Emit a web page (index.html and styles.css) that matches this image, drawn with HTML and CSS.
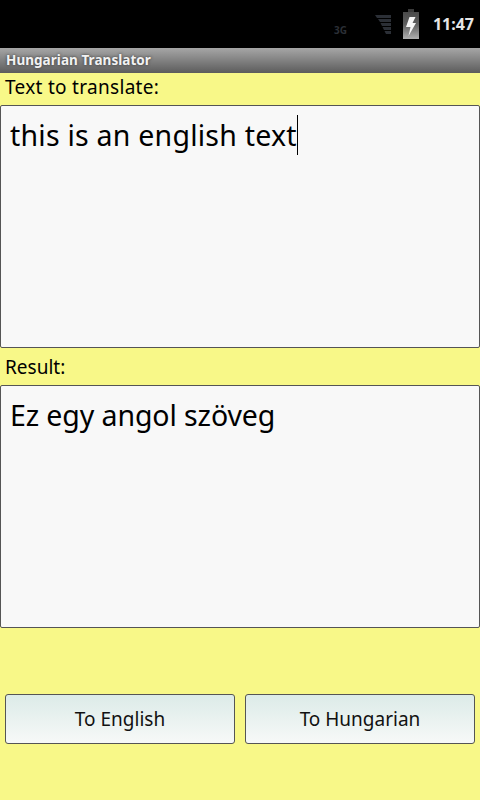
FILE: index.html
```html
<!DOCTYPE html>
<html lang="en">
<head>
    <meta charset="UTF-8">
    <meta name="viewport" content="width=device-width, initial-scale=1.0">
    <title>Hungarian Translator</title>
    <link rel="stylesheet" href="styles.css">
</head>
<body>
    <div class="status-bar">
        <span class="net-label">3G</span>
        <svg class="signal" width="16" height="19" viewBox="0 0 16 19">
            <path d="M0 0H16V3H2Z M3 4H16V7H5Z M5.500 8H16V11H7Z M7.500 12H16V15H9Z M9.500 16H16V19H11Z" fill="#2b2f36"/>
        </svg>
        <svg class="battery" width="16" height="30" viewBox="0 0 16 30">
            <defs>
                <linearGradient id="batteryFill" x1="0" y1="0" x2="0" y2="1">
                    <stop offset="0" stop-color="#4a4a4a"/>
                    <stop offset="0.45" stop-color="#5e5e5e"/>
                    <stop offset="1" stop-color="#b0b0b0"/>
                </linearGradient>
            </defs>
            <rect x="5" y="0" width="6" height="3" fill="#3a3a3a"/>
            <rect x="0" y="3" width="16" height="27" fill="url(#batteryFill)"/>
            <path d="M6.500 8H12.500L9.500 14H13L5.500 27L7.500 18H3Z" fill="#f6f6f6"/>
        </svg>
        <span class="clock">11:47</span>
    </div>
    <div class="title-bar">Hungarian Translator</div>
    <main class="content">
        <label class="field-label source-label">Text to translate:</label>
        <div class="text-box"><span class="typed">this is an english text</span></div>
        <label class="field-label result-label">Result:</label>
        <div class="text-box result-text">Ez egy angol szöveg</div>
        <div class="actions">
            <button class="action-btn">To English</button>
            <button class="action-btn">To Hungarian</button>
        </div>
    </main>
</body>
</html>
```

FILE: styles.css
```css
* { box-sizing: border-box; }
body {
    margin: 0;
    width: 480px;
    height: 800px;
    overflow: hidden;
    background: #f8f888;
    font-family: "Noto Sans", "Open Sans", sans-serif;
    color: #000;
}
.status-bar {
    height: 48px;
    background: #000;
    display: flex;
    align-items: center;
    justify-content: flex-end;
    padding-right: 6px;
}
.net-label {
    font-size: 10px;
    font-weight: 700;
    color: #2b2f36;
    margin-right: 28px;
    margin-top: 11px;
}
.signal { margin-right: 12px; }
.battery { margin-right: 14px; }
.clock {
    font-size: 16px;
    font-weight: 700;
    color: #e6e6e6;
}
.title-bar {
    height: 25px;
    background: linear-gradient(#a6a6a6, #5c5c5c);
    color: #f2f2f2;
    font-size: 13.5px;
    font-weight: 700;
    letter-spacing: 0.05px;
    line-height: 24px;
    padding-left: 6px;
    text-shadow: 0 0 3px #333;
}
.content {
    display: flex;
    flex-direction: column;
}
.field-label {
    display: block;
    height: 32px;
    padding-left: 5px;
    font-size: 19px;
    line-height: 28px;
}
.source-label { letter-spacing: 0.3px; }
.result-label {
    height: 37px;
    line-height: 38px;
}
.text-box {
    height: 243px;
    background: #f8f8f8;
    border: 1px solid #555;
    border-radius: 2px;
    padding: 9px 9px;
    font-size: 28.5px;
    line-height: 40px;
}
.result-text { letter-spacing: -0.1px; }
.typed {
    border-right: 1px solid #000;
    display: inline-block;
    letter-spacing: 0.23px;
}
.actions {
    display: flex;
    gap: 10px;
    padding: 66px 5px 0;
}
.action-btn {
    flex: 1;
    height: 50px;
    background: linear-gradient(#dcebe8, #f7f9f8);
    border: 1px solid #555;
    border-radius: 3px;
    font-family: inherit;
    font-size: 19px;
    color: #111;
    padding: 0;
}
```
